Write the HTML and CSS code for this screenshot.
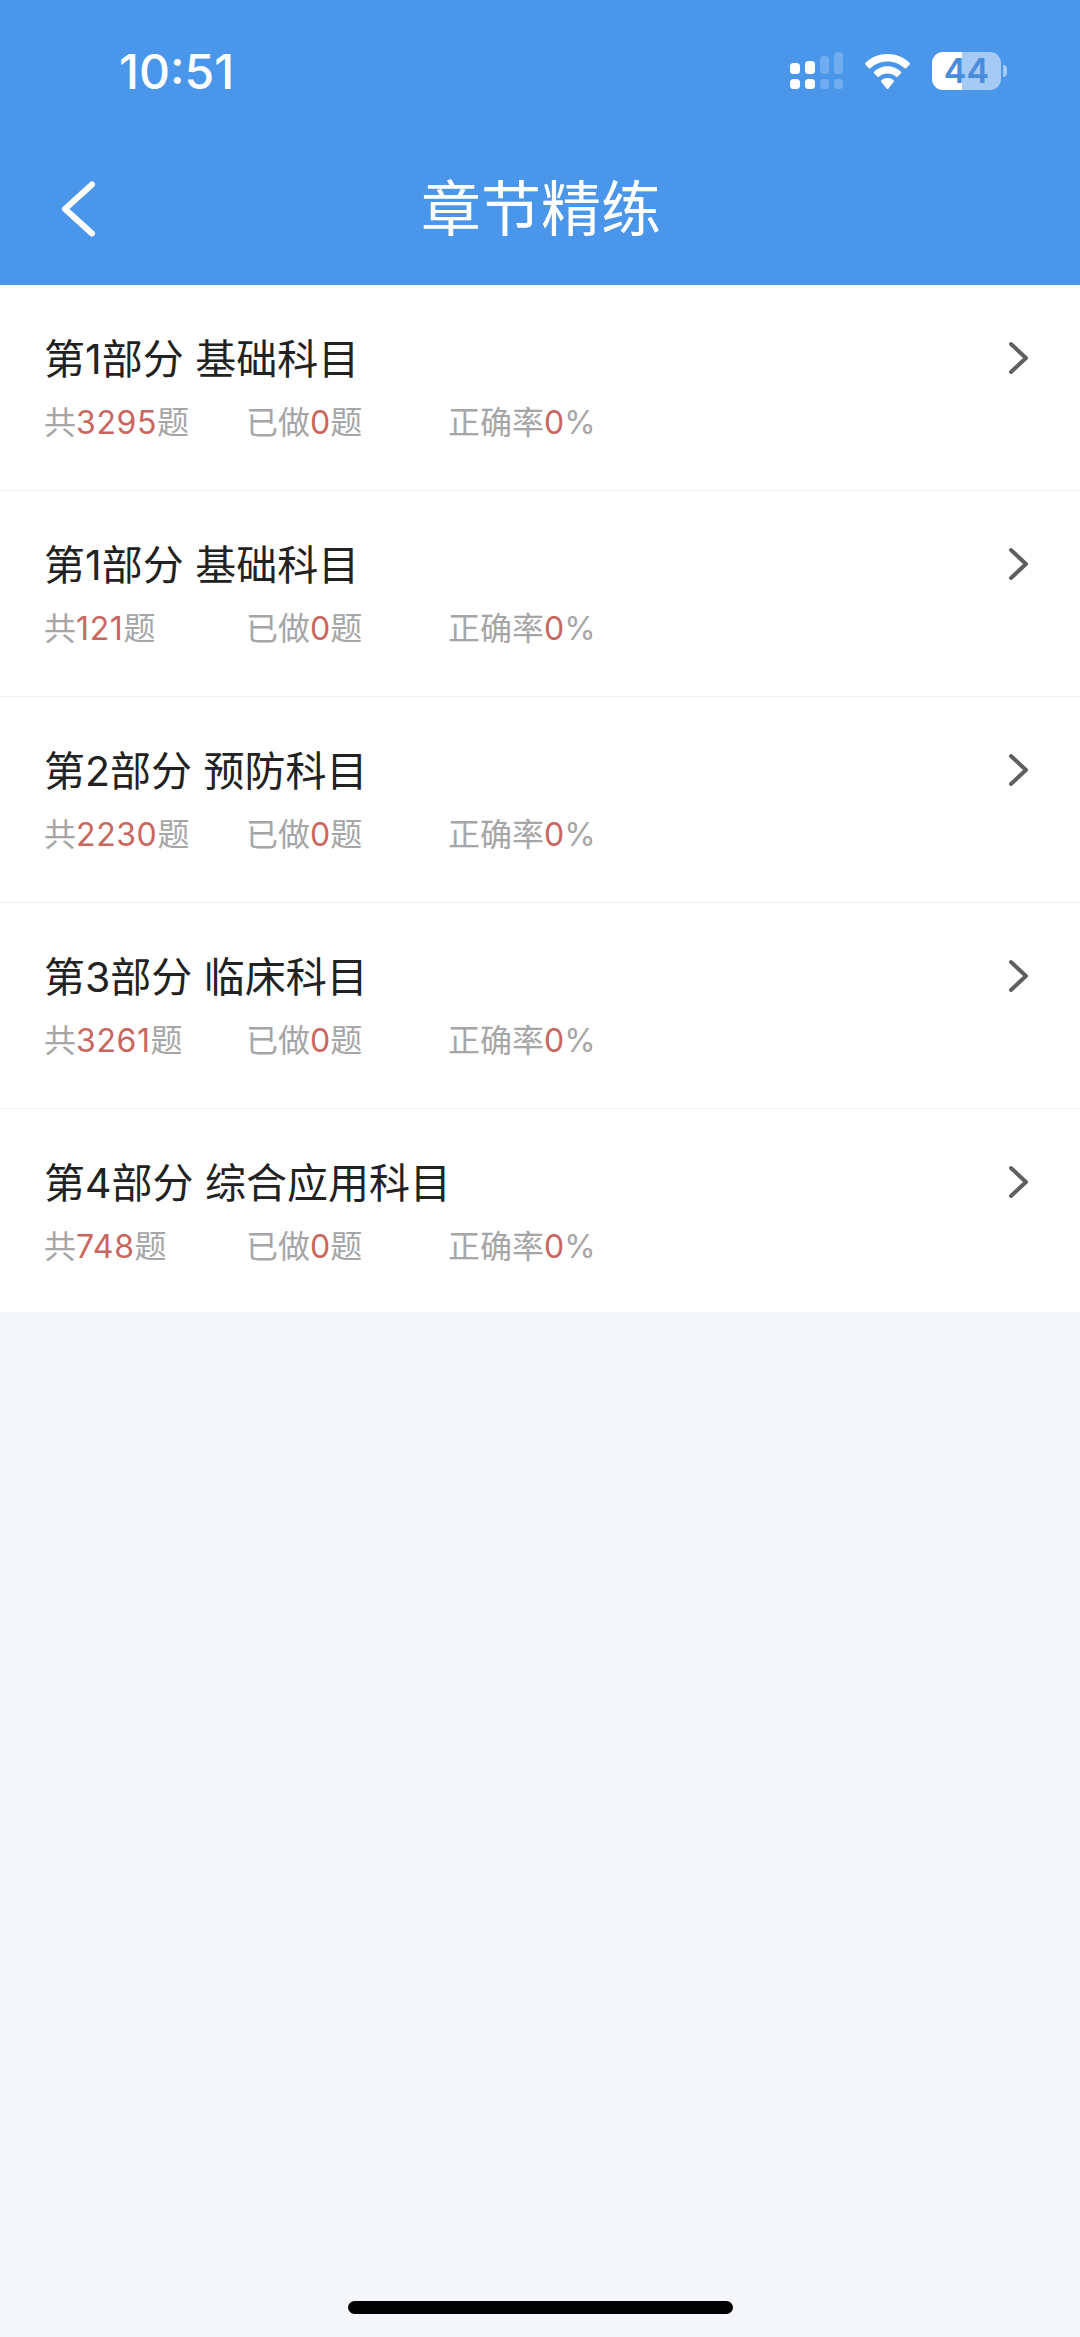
FILE: index.html
```html
<!DOCTYPE html>
<html lang="zh-CN">
<head>
    <meta charset="utf-8">
    <title>章节精练</title>
    <link rel="stylesheet" href="styles.css">
</head>
<body>
<div class="page">
    <header class="header">
        <div class="status-bar">
            <span class="time">10:51</span>
            <div class="status-icons">
                <svg class="signal" width="53" height="38" viewBox="0 0 53 38">
                    <rect x="0" y="11" width="10" height="11" rx="3.5" fill="#fff"/>
                    <rect x="15" y="9" width="10" height="13" rx="3.5" fill="#fff"/>
                    <rect x="30" y="4" width="9" height="18" rx="3.5" fill="#fff" opacity=".22"/>
                    <rect x="44" y="0" width="9" height="22" rx="3.5" fill="#fff" opacity=".22"/>
                    <rect x="0" y="27" width="10" height="10" rx="3.5" fill="#fff"/>
                    <rect x="15" y="27" width="10" height="10" rx="3.5" fill="#fff"/>
                    <rect x="30" y="27" width="9" height="10" rx="3.5" fill="#fff" opacity=".22"/>
                    <rect x="44" y="27" width="9" height="10" rx="3.5" fill="#fff" opacity=".22"/>
                </svg>
                <svg class="wifi" width="47" height="35" viewBox="0 0 46 35">
                    <path d="M23 0C14.500 0 6.800 3.300 1 8.700a1.500 1.500 0 0 0 0 2.100l3.100 3.200a1.400 1.400 0 0 0 2 0C10.500 9.900 16.400 7.400 23 7.400s12.500 2.500 16.900 6.600a1.400 1.400 0 0 0 2 0l3.100-3.200a1.500 1.500 0 0 0 0-2.100C39.200 3.300 31.500 0 23 0z" fill="#fff"/>
                    <path d="M23 12.300c-5.100 0-9.800 2-13.300 5.200a1.400 1.400 0 0 0 0 2l3 3.100a1.400 1.400 0 0 0 2 0c2.200-1.900 5.100-3.100 8.300-3.100s6.100 1.200 8.300 3.100a1.400 1.400 0 0 0 2 0l3-3.100a1.400 1.400 0 0 0 0-2c-3.500-3.200-8.200-5.200-13.300-5.200z" fill="#fff"/>
                    <path d="M23 24c-2.400 0-4.500.8-6.100 2.200a1.200 1.200 0 0 0 0 1.800l5.200 6.400a1.200 1.200 0 0 0 1.800 0l5.200-6.400a1.200 1.200 0 0 0 0-1.800C27.500 24.800 25.400 24 23 24z" fill="#fff"/>
                </svg>
                <div class="battery">
                    <div class="battery-body">44</div>
                    <div class="battery-cap"></div>
                </div>
            </div>
        </div>
        <div class="nav-bar">
            <svg class="back" width="36" height="56" viewBox="0 0 36 56">
                <path d="M32 3.500L5 28l27 24.500" fill="none" stroke="#fff" stroke-width="6" stroke-linecap="round" stroke-linejoin="round"/>
            </svg>
            <h1 class="title">章节精练</h1>
        </div>
    </header>

    <ul class="list">
        <li class="row">
            <div class="row-main">
                <div class="row-title">第1部分 基础科目</div>
                <div class="row-stats">
                    <span class="stat stat-total">共<em>3295</em>题</span>
                    <span class="stat stat-done">已做<em>0</em>题</span>
                    <span class="stat">正确率<em>0</em>%</span>
                </div>
            </div>
            <svg class="arrow" width="22" height="34" viewBox="0 0 22 34"><path d="M3 3l15 14L3 31" fill="none" stroke="#5f5f5f" stroke-width="4" stroke-linecap="round" stroke-linejoin="round"/></svg>
        </li>
        <li class="row">
            <div class="row-main">
                <div class="row-title">第1部分 基础科目</div>
                <div class="row-stats">
                    <span class="stat stat-total">共<em>121</em>题</span>
                    <span class="stat stat-done">已做<em>0</em>题</span>
                    <span class="stat">正确率<em>0</em>%</span>
                </div>
            </div>
            <svg class="arrow" width="22" height="34" viewBox="0 0 22 34"><path d="M3 3l15 14L3 31" fill="none" stroke="#5f5f5f" stroke-width="4" stroke-linecap="round" stroke-linejoin="round"/></svg>
        </li>
        <li class="row">
            <div class="row-main">
                <div class="row-title">第2部分 预防科目</div>
                <div class="row-stats">
                    <span class="stat stat-total">共<em>2230</em>题</span>
                    <span class="stat stat-done">已做<em>0</em>题</span>
                    <span class="stat">正确率<em>0</em>%</span>
                </div>
            </div>
            <svg class="arrow" width="22" height="34" viewBox="0 0 22 34"><path d="M3 3l15 14L3 31" fill="none" stroke="#5f5f5f" stroke-width="4" stroke-linecap="round" stroke-linejoin="round"/></svg>
        </li>
        <li class="row">
            <div class="row-main">
                <div class="row-title">第3部分 临床科目</div>
                <div class="row-stats">
                    <span class="stat stat-total">共<em>3261</em>题</span>
                    <span class="stat stat-done">已做<em>0</em>题</span>
                    <span class="stat">正确率<em>0</em>%</span>
                </div>
            </div>
            <svg class="arrow" width="22" height="34" viewBox="0 0 22 34"><path d="M3 3l15 14L3 31" fill="none" stroke="#5f5f5f" stroke-width="4" stroke-linecap="round" stroke-linejoin="round"/></svg>
        </li>
        <li class="row">
            <div class="row-main">
                <div class="row-title">第4部分 综合应用科目</div>
                <div class="row-stats">
                    <span class="stat stat-total">共<em>748</em>题</span>
                    <span class="stat stat-done">已做<em>0</em>题</span>
                    <span class="stat">正确率<em>0</em>%</span>
                </div>
            </div>
            <svg class="arrow" width="22" height="34" viewBox="0 0 22 34"><path d="M3 3l15 14L3 31" fill="none" stroke="#5f5f5f" stroke-width="4" stroke-linecap="round" stroke-linejoin="round"/></svg>
        </li>
    </ul>

    <div class="home-bar"></div>
</div>
</body>
</html>
```

FILE: styles.css
```css
html, body {
    margin: 0;
    padding: 0;
    overflow: hidden;
}

body {
    font-family: "Inter", "Noto Sans CJK SC", sans-serif;
    background: #f4f6fa;
}

.page {
    width: 1080px;
    height: 2337px;
    display: flex;
    flex-direction: column;
}

.header {
    height: 285px;
    background: #4a96ea;
    color: #fff;
    flex-shrink: 0;
}

.status-bar {
    height: 144px;
    box-sizing: border-box;
    padding: 48px 73px 0 119px;
    display: flex;
    justify-content: space-between;
    align-items: flex-start;
}

.time {
    font-size: 48px;
    font-weight: 500;
    line-height: 48px;
}

.status-icons {
    display: flex;
    align-items: center;
    gap: 21px;
    padding-top: 4px;
}

.battery {
    display: flex;
    align-items: center;
    gap: 2px;
}

.battery-body {
    width: 69px;
    height: 38px;
    border-radius: 11px;
    background: linear-gradient(to right, #fff 0 30px, #a5caf5 30px);
    color: #4a8cdc;
    font-size: 34px;
    font-weight: 600;
    line-height: 38px;
    text-align: center;
}

.battery-cap {
    width: 4px;
    height: 12px;
    border-radius: 0 4px 4px 0;
    background: #a5caf5;
}

.nav-bar {
    display: flex;
    align-items: center;
    height: 130px;
    padding-left: 60px;
}

.back {
    flex-shrink: 0;
}

.title {
    margin: 0;
    width: 890px;
    box-sizing: border-box;
    text-align: center;
    font-size: 60px;
    font-weight: 400;
    line-height: 70px;
}

.list {
    list-style: none;
    margin: 0;
    padding: 0;
    background: #fff;
}

.row {
    height: 206px;
    box-sizing: border-box;
    padding: 48px 50px 0 44px;
    display: flex;
    justify-content: space-between;
    align-items: flex-start;
    border-bottom: 1px solid #f1f1f1;
}

.row:last-child {
    border-bottom: none;
    height: 203px;
}

.row-title {
    font-size: 41px;
    line-height: 52px;
    color: #222;
}

.row-stats {
    margin-top: 17px;
    display: flex;
    font-size: 32px;
    line-height: 42px;
    color: #a6a6a6;
}

.stat em {
    font-style: normal;
    color: #c9675f;
}

.stat-total {
    width: 202px;
}

.stat-total em {
    letter-spacing: 0.6px;
}

.stat-done {
    width: 202px;
}

.arrow {
    margin-top: 8px;
}

.home-bar {
    width: 385px;
    height: 13px;
    border-radius: 7px;
    background: #000;
    margin: auto auto 23px;
}
```
